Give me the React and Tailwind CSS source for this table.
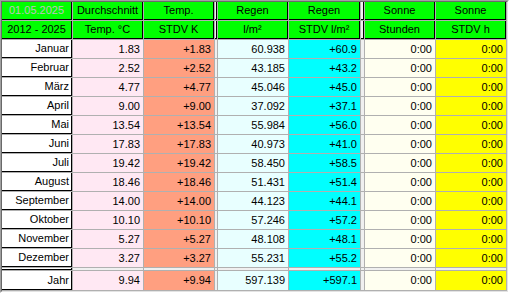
import React from 'react';

const months = [
  ['Januar', '1.83', '+1.83', '60.938', '+60.9'],
  ['Februar', '2.52', '+2.52', '43.185', '+43.2'],
  ['März', '4.77', '+4.77', '45.046', '+45.0'],
  ['April', '9.00', '+9.00', '37.092', '+37.1'],
  ['Mai', '13.54', '+13.54', '55.984', '+56.0'],
  ['Juni', '17.83', '+17.83', '40.973', '+41.0'],
  ['Juli', '19.42', '+19.42', '58.450', '+58.5'],
  ['August', '18.46', '+18.46', '51.431', '+51.4'],
  ['September', '14.00', '+14.00', '44.123', '+44.1'],
  ['Oktober', '10.10', '+10.10', '57.246', '+57.2'],
  ['November', '5.27', '+5.27', '48.108', '+48.1'],
  ['Dezember', '3.27', '+3.27', '55.231', '+55.2'],
];

const yearRow = ['Jahr', '9.94', '+9.94', '597.139', '+597.1'];

// fixed cells (header rows + first column) get the black bottom/right edge
const Fixed = ({ children, className = '' }) => (
  <div className={`box-border border-r border-b border-black flex items-center leading-none overflow-hidden whitespace-nowrap ${className}`}>
    {children}
  </div>
);

const Data = ({ children, className = '' }) => (
  <div className={`flex items-center justify-end pr-[3px] leading-none whitespace-nowrap ${className}`}>
    {children}
  </div>
);

const Gap = () => <div className="bg-[#f0f0f0]" />;

const HeaderCell = ({ children, className = '' }) => (
  <Fixed className={`bg-[#00ff00] justify-center ${className}`}>{children}</Fixed>
);

const MonthRow = ({ row }) => {
  const [name, avg, stdv, rain, rainStdv] = row;
  return (
    <>
      <Fixed className="bg-white justify-end pr-[2px]">{name}</Fixed>
      <Data className="bg-[#ffe8f3]">{avg}</Data>
      <Data className="bg-[#ff9f80]">{stdv}</Data>
      <Gap />
      <Data className="bg-[#e8ffff]">{rain}</Data>
      <Data className="bg-[#00ffff]">{rainStdv}</Data>
      <Gap />
      <Data className="bg-[#fffff0]">0:00</Data>
      <Data className="bg-[#ffff00]">0:00</Data>
    </>
  );
};

const App = () => {
  return (
    <div className="w-[509px] h-[293px] bg-[#f0f0f0] text-[11px] text-black font-['Liberation_Sans',Arial,sans-serif]">
      <div className="border-t border-l border-[#a0a0a0] border-r border-b border-r-white border-b-white">
        <div className="border-t border-l border-[#696969] border-r border-b border-r-[#e3e3e3] border-b-[#e3e3e3]">
          <div className="grid grid-cols-[70px_70px_70px_2px_70px_71px_3px_70px_70px] grid-rows-[18px_18px_repeat(12,18px)_2px_19px] gap-px pr-px pb-px bg-[#b0b0b0]">
            {/* header row 1 */}
            <HeaderCell className="text-[#c0c0c0]">01.05.2025</HeaderCell>
            <HeaderCell>Durchschnitt</HeaderCell>
            <HeaderCell>Temp.</HeaderCell>
            <Fixed className="bg-[#f0f0f0]" />
            <HeaderCell>Regen</HeaderCell>
            <HeaderCell>Regen</HeaderCell>
            <Fixed className="bg-[#f0f0f0]" />
            <HeaderCell>Sonne</HeaderCell>
            <HeaderCell>Sonne</HeaderCell>

            {/* header row 2 */}
            <HeaderCell>2012 - 2025</HeaderCell>
            <HeaderCell>Temp. °C</HeaderCell>
            <HeaderCell>STDV K</HeaderCell>
            <Fixed className="bg-[#f0f0f0]" />
            <HeaderCell>l/m²</HeaderCell>
            <HeaderCell>STDV l/m²</HeaderCell>
            <Fixed className="bg-[#f0f0f0]" />
            <HeaderCell>Stunden</HeaderCell>
            <HeaderCell>STDV h</HeaderCell>

            {months.map((row) => (
              <MonthRow key={row[0]} row={row} />
            ))}

            {/* thin spacer row before the year total */}
            <Fixed className="bg-white" />
            <Gap />
            <Gap />
            <Gap />
            <Gap />
            <Gap />
            <Gap />
            <Gap />
            <Gap />

            <MonthRow row={yearRow} />
          </div>
        </div>
      </div>
    </div>
  );
};

export default App;
